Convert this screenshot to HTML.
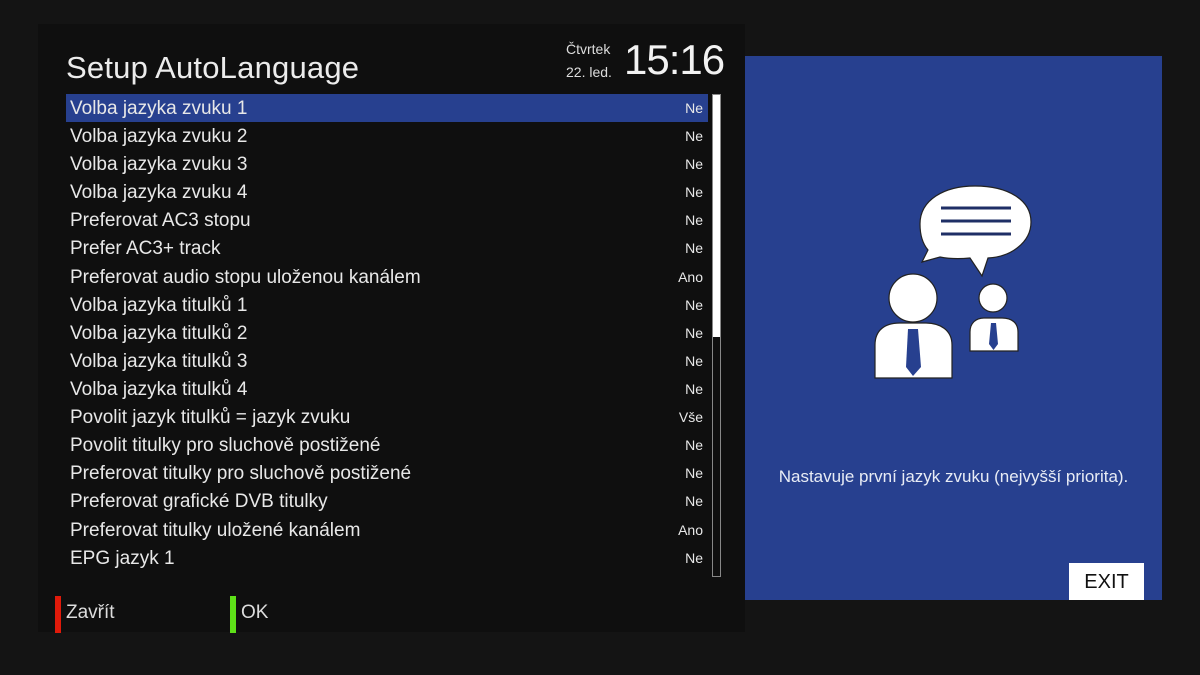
<!DOCTYPE html>
<html><head><meta charset="utf-8"><style>
body{margin:0;width:1200px;height:675px;background:#141414;position:relative;overflow:hidden;font-family:"Liberation Sans",sans-serif;color:#e8e8e8}
.panel{position:absolute;left:38px;top:24px;width:707px;height:608px;background:#0f0f0f}
.title{position:absolute;left:66px;top:50px;font-size:31px;color:#ececec;letter-spacing:0.2px}
.day{position:absolute;left:566px;top:38px;font-size:14px;color:#ddd;line-height:23px}
.time{position:absolute;left:624px;top:36px;font-size:42px;color:#f2f2f2;letter-spacing:-1px}
.row{position:absolute;left:66px;width:642px;height:28px;line-height:30px;font-size:19px}
.row span{position:absolute;left:4px}
.row b{position:absolute;right:5px;font-weight:normal;font-size:14px;line-height:28px}
.sel{background:#27408f}
.sb{position:absolute;left:712px;top:94px;width:7px;height:481px;border:1px solid #888;background:#0f0f0f}
.thumb{position:absolute;left:0;top:0;width:7px;height:242px;background:#fff}
.blue{position:absolute;left:745px;top:56px;width:417px;height:544px;background:#27408f}
.help{position:absolute;left:745px;width:417px;top:467px;text-align:center;font-size:17px;color:#e8ecf5}
.exit{position:absolute;left:1069px;top:563px;width:75px;height:37px;background:#fff;color:#111;font-size:20px;text-align:center;line-height:38px}
.key{position:absolute;top:596px;width:6px;height:37px}
.kt{position:absolute;top:602px;font-size:19px;color:#ddd}
</style></head><body>
<div class="panel"></div>
<div class="title">Setup AutoLanguage</div>
<div class="day">Čtvrtek<br>22. led.</div>
<div class="time">15:16</div>
<div class="row sel" style="top:94px"><span>Volba jazyka zvuku 1</span><b>Ne</b></div>
<div class="row" style="top:122px"><span>Volba jazyka zvuku 2</span><b>Ne</b></div>
<div class="row" style="top:150px"><span>Volba jazyka zvuku 3</span><b>Ne</b></div>
<div class="row" style="top:178px"><span>Volba jazyka zvuku 4</span><b>Ne</b></div>
<div class="row" style="top:206px"><span>Preferovat AC3 stopu</span><b>Ne</b></div>
<div class="row" style="top:234px"><span>Prefer AC3+ track</span><b>Ne</b></div>
<div class="row" style="top:263px"><span>Preferovat audio stopu uloženou kanálem</span><b>Ano</b></div>
<div class="row" style="top:291px"><span>Volba jazyka titulků 1</span><b>Ne</b></div>
<div class="row" style="top:319px"><span>Volba jazyka titulků 2</span><b>Ne</b></div>
<div class="row" style="top:347px"><span>Volba jazyka titulků 3</span><b>Ne</b></div>
<div class="row" style="top:375px"><span>Volba jazyka titulků 4</span><b>Ne</b></div>
<div class="row" style="top:403px"><span>Povolit jazyk titulků = jazyk zvuku</span><b>Vše</b></div>
<div class="row" style="top:431px"><span>Povolit titulky pro sluchově postižené</span><b>Ne</b></div>
<div class="row" style="top:459px"><span>Preferovat titulky pro sluchově postižené</span><b>Ne</b></div>
<div class="row" style="top:487px"><span>Preferovat grafické DVB titulky</span><b>Ne</b></div>
<div class="row" style="top:516px"><span>Preferovat titulky uložené kanálem</span><b>Ano</b></div>
<div class="row" style="top:544px"><span>EPG jazyk 1</span><b>Ne</b></div>
<div class="sb"><div class="thumb"></div></div>
<div class="blue"></div>
<svg style="position:absolute;left:860px;top:180px" width="180" height="200" viewBox="0 0 180 200">
<g fill="#fff" stroke="#222" stroke-width="1.2">
<path d="M115 6 C148 6 171 20 171 42 C171 63 150 77 128 78 L122 96 L110 78 C100 79 90 79 80 77 L62 82 L68 70 C62 63 60 54 60 44 C60 20 84 6 115 6 Z"/>
<circle cx="53" cy="118" r="24"/>
<path d="M15 198 L15 165 C15 150 25 143 40 143 L66 143 C80 143 92 150 92 165 L92 198 Z"/>
<circle cx="133" cy="118" r="14"/>
<path d="M110 171 L110 152 C110 143 116 138 124 138 L142 138 C152 138 158 143 158 152 L158 171 Z"/>
</g>
<g fill="#27408f">
<path d="M48 149 L58 149 L61 187 L53 196 L46 187 Z"/>
<path d="M131 143 L136 143 L138 164 L133.5 170 L129 164 Z"/>
</g>
<g stroke="#1f2f66" stroke-width="3">
<line x1="81" y1="28" x2="151" y2="28"/><line x1="81" y1="41" x2="151" y2="41"/><line x1="81" y1="54" x2="151" y2="54"/>
</g>
</svg>
<div class="help">Nastavuje první jazyk zvuku (nejvyšší priorita).</div>
<div class="exit">EXIT</div>
<div class="key" style="left:55px;background:#e01a0a"></div>
<div class="kt" style="left:66px">Zavřít</div>
<div class="key" style="left:230px;background:#5ee018"></div>
<div class="kt" style="left:241px">OK</div>
</body></html>
